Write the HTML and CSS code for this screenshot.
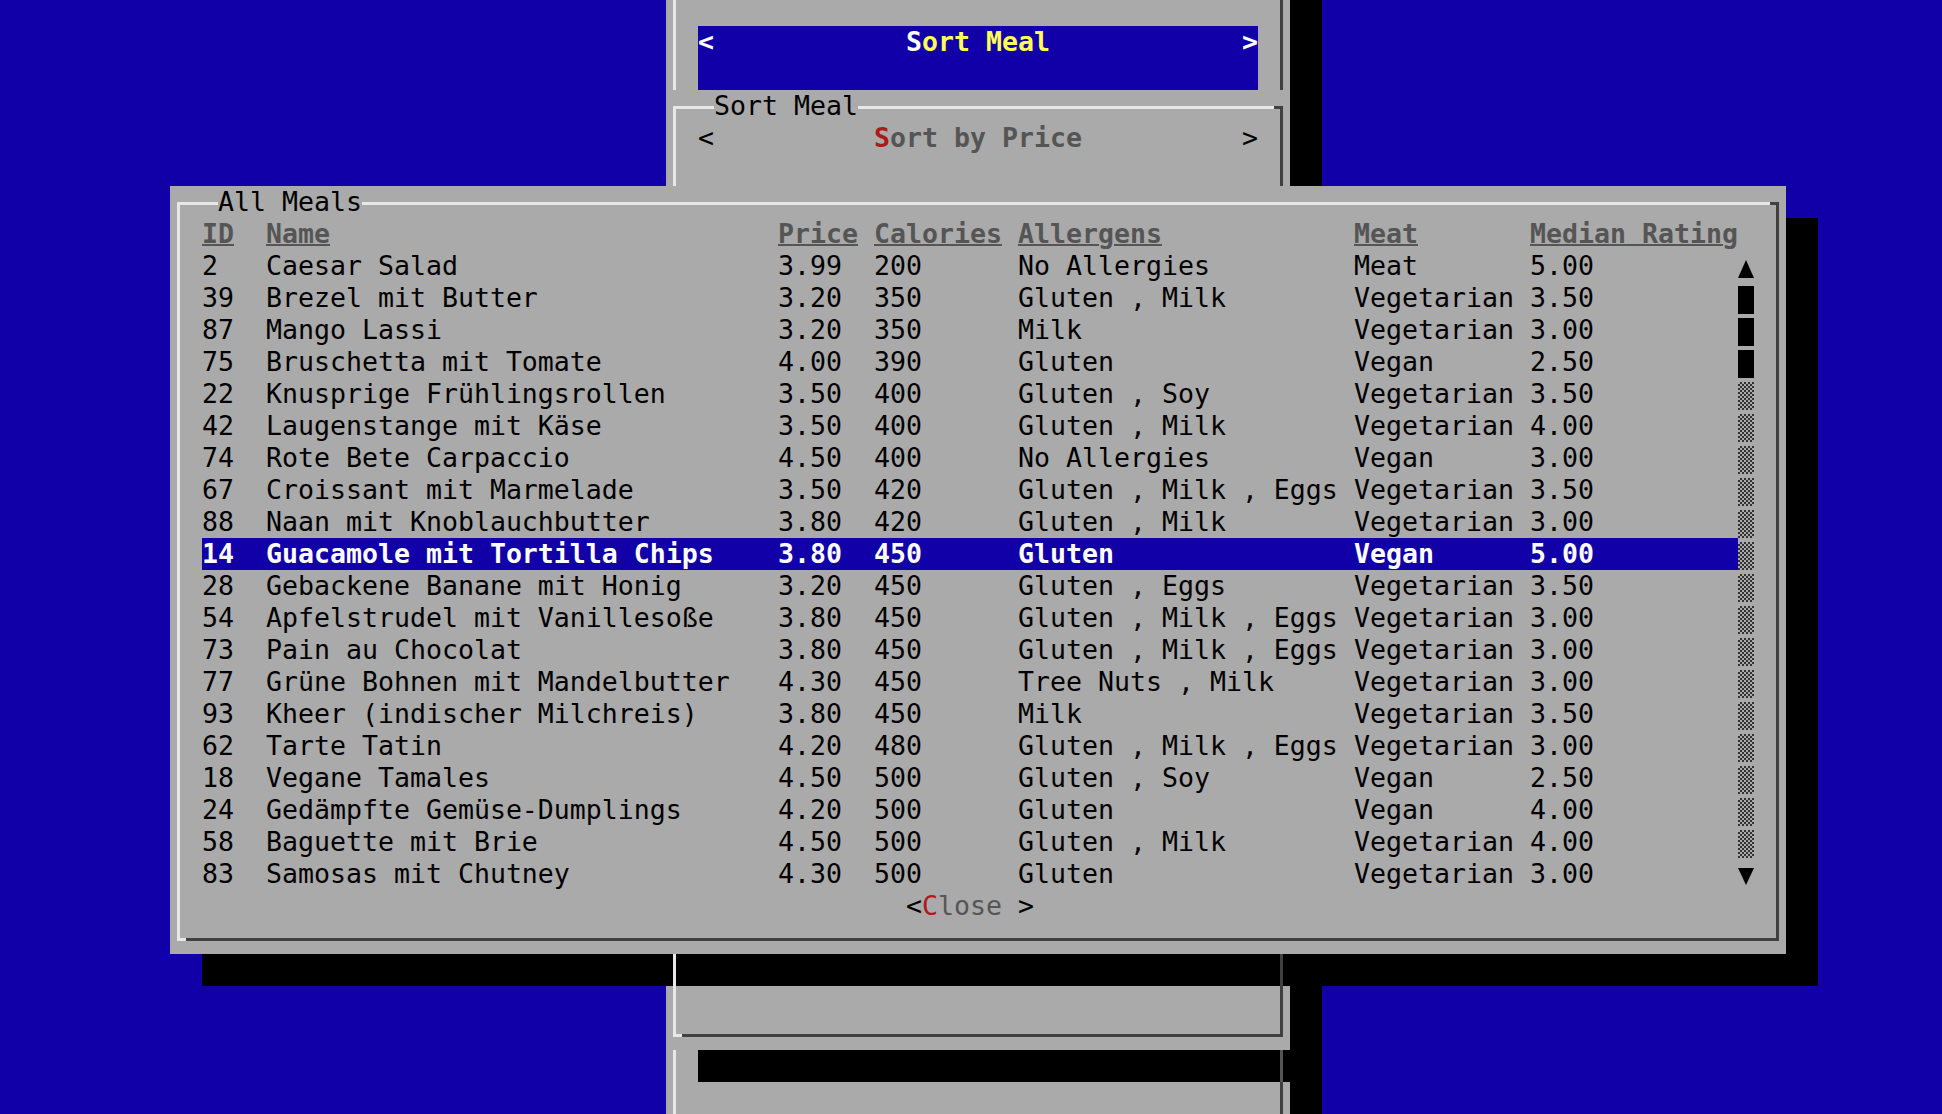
FILE: index.html
```html
<!DOCTYPE html>
<html lang="de">
<head>
<meta charset="utf-8">
<title>Sort Meal</title>
<link rel="stylesheet" href="styles.css">
</head>
<body>
<div class="screen">

  <div class="back">
    <div class="vl vl-top"></div>
    <div class="vr vr-top"></div>
    <div class="sortbar">
      <span class="sb-l">&lt;</span>
      <span class="sb-t"><span class="hotw">S</span>ort Meal</span>
      <span class="sb-r">&gt;</span>
    </div>
    <div class="box bk-box"></div>
    <span class="bk-label">Sort Meal</span>
    <span class="bk-lt">&lt;</span>
    <span class="bk-btn"><span class="hot">S</span>ort by Price</span>
    <span class="bk-gt">&gt;</span>
    <div class="bk-black"></div>
    <div class="vl vl-bot"></div>
    <div class="vr vr-bot"></div>
  </div>
  <div class="back-shadow"></div>

  <div class="main-shadow"></div>
  <div class="dim dim-l"></div>
  <div class="dim dim-r"></div>

  <div class="main box">
    <span class="title">All Meals</span>
    <div class="table">
      <div class="trow thead"><span>ID</span><span>Name</span><span>Price</span><span>Calories</span><span>Allergens</span><span>Meat</span><span>Median Rating</span></div>
      <div class="trow"><span>2</span><span>Caesar Salad</span><span>3.99</span><span>200</span><span>No Allergies</span><span>Meat</span><span>5.00</span></div>
      <div class="trow"><span>39</span><span>Brezel mit Butter</span><span>3.20</span><span>350</span><span>Gluten , Milk</span><span>Vegetarian</span><span>3.50</span></div>
      <div class="trow"><span>87</span><span>Mango Lassi</span><span>3.20</span><span>350</span><span>Milk</span><span>Vegetarian</span><span>3.00</span></div>
      <div class="trow"><span>75</span><span>Bruschetta mit Tomate</span><span>4.00</span><span>390</span><span>Gluten</span><span>Vegan</span><span>2.50</span></div>
      <div class="trow"><span>22</span><span>Knusprige Frühlingsrollen</span><span>3.50</span><span>400</span><span>Gluten , Soy</span><span>Vegetarian</span><span>3.50</span></div>
      <div class="trow"><span>42</span><span>Laugenstange mit Käse</span><span>3.50</span><span>400</span><span>Gluten , Milk</span><span>Vegetarian</span><span>4.00</span></div>
      <div class="trow"><span>74</span><span>Rote Bete Carpaccio</span><span>4.50</span><span>400</span><span>No Allergies</span><span>Vegan</span><span>3.00</span></div>
      <div class="trow"><span>67</span><span>Croissant mit Marmelade</span><span>3.50</span><span>420</span><span>Gluten , Milk , Eggs</span><span>Vegetarian</span><span>3.50</span></div>
      <div class="trow"><span>88</span><span>Naan mit Knoblauchbutter</span><span>3.80</span><span>420</span><span>Gluten , Milk</span><span>Vegetarian</span><span>3.00</span></div>
      <div class="trow sel"><span>14</span><span>Guacamole mit Tortilla Chips</span><span>3.80</span><span>450</span><span>Gluten</span><span>Vegan</span><span>5.00</span></div>
      <div class="trow"><span>28</span><span>Gebackene Banane mit Honig</span><span>3.20</span><span>450</span><span>Gluten , Eggs</span><span>Vegetarian</span><span>3.50</span></div>
      <div class="trow"><span>54</span><span>Apfelstrudel mit Vanillesoße</span><span>3.80</span><span>450</span><span>Gluten , Milk , Eggs</span><span>Vegetarian</span><span>3.00</span></div>
      <div class="trow"><span>73</span><span>Pain au Chocolat</span><span>3.80</span><span>450</span><span>Gluten , Milk , Eggs</span><span>Vegetarian</span><span>3.00</span></div>
      <div class="trow"><span>77</span><span>Grüne Bohnen mit Mandelbutter</span><span>4.30</span><span>450</span><span>Tree Nuts , Milk</span><span>Vegetarian</span><span>3.00</span></div>
      <div class="trow"><span>93</span><span>Kheer (indischer Milchreis)</span><span>3.80</span><span>450</span><span>Milk</span><span>Vegetarian</span><span>3.50</span></div>
      <div class="trow"><span>62</span><span>Tarte Tatin</span><span>4.20</span><span>480</span><span>Gluten , Milk , Eggs</span><span>Vegetarian</span><span>3.00</span></div>
      <div class="trow"><span>18</span><span>Vegane Tamales</span><span>4.50</span><span>500</span><span>Gluten , Soy</span><span>Vegan</span><span>2.50</span></div>
      <div class="trow"><span>24</span><span>Gedämpfte Gemüse-Dumplings</span><span>4.20</span><span>500</span><span>Gluten</span><span>Vegan</span><span>4.00</span></div>
      <div class="trow"><span>58</span><span>Baguette mit Brie</span><span>4.50</span><span>500</span><span>Gluten , Milk</span><span>Vegetarian</span><span>4.00</span></div>
      <div class="trow"><span>83</span><span>Samosas mit Chutney</span><span>4.30</span><span>500</span><span>Gluten</span><span>Vegetarian</span><span>3.00</span></div>
    </div>
    <div class="scroll">
      <div class="sc-cell"><svg class="arrow" width="16" height="32" viewBox="0 0 16 32"><polygon points="8,10 16,28 0,28" fill="#000"/></svg></div>
      <div class="sc-cell"><div class="blk"></div></div>
      <div class="sc-cell"><div class="blk"></div></div>
      <div class="sc-cell"><div class="blk"></div></div>
      <div class="sc-cell"><div class="shade"></div></div>
      <div class="sc-cell"><div class="shade"></div></div>
      <div class="sc-cell"><div class="shade"></div></div>
      <div class="sc-cell"><div class="shade"></div></div>
      <div class="sc-cell"><div class="shade"></div></div>
      <div class="sc-cell"><div class="shade"></div></div>
      <div class="sc-cell"><div class="shade"></div></div>
      <div class="sc-cell"><div class="shade"></div></div>
      <div class="sc-cell"><div class="shade"></div></div>
      <div class="sc-cell"><div class="shade"></div></div>
      <div class="sc-cell"><div class="shade"></div></div>
      <div class="sc-cell"><div class="shade"></div></div>
      <div class="sc-cell"><div class="shade"></div></div>
      <div class="sc-cell"><div class="shade"></div></div>
      <div class="sc-cell"><div class="shade"></div></div>
      <div class="sc-cell"><svg class="arrow" width="16" height="32" viewBox="0 0 16 32"><polygon points="0,10 16,10 8,27" fill="#000"/></svg></div>
    </div>
    <span class="close">&lt;<span class="hot">C</span><span class="dis">lose</span> &gt;</span>
  </div>

</div>
</body>
</html>
```

FILE: styles.css
```css
:root {
  --blue: #1100a8;
  --gray: #aaaaaa;
  --light: #e8e8e8;
  --dark: #404040;
  --dis: #555555;
  --red: #b01818;
  --yellow: #ffff55;
}

html, body {
  margin: 0;
  padding: 0;
  width: 1942px;
  height: 1114px;
  overflow: hidden;
  background: var(--blue);
}

.screen {
  display: grid;
  grid-template-columns: 10px repeat(121, 16px);
  grid-template-rows: repeat(35, 32px);
  margin-top: -6px;
  font-family: "DejaVu Sans Mono", monospace;
  font-size: 26.57px;
  line-height: 32px;
  white-space: pre;
  color: #000;
}

/* ---------- box drawing (3D frame on edge cells) ---------- */
.box { position: relative; }
.box::before {
  content: "";
  position: absolute;
  top: 16px; left: 7px; right: 16px; bottom: 13px;
  border-top: 3px solid var(--light);
  border-left: 3px solid var(--light);
  background: linear-gradient(var(--light), var(--light)) left bottom / 9px 3px no-repeat;
  background-origin: border-box;
}
.box::after {
  content: "";
  position: absolute;
  top: 16px; right: 7px; bottom: 13px; left: 16px;
  border-right: 3px solid var(--dark);
  border-bottom: 3px solid var(--dark);
  background: linear-gradient(var(--dark), var(--dark)) right top / 9px 3px no-repeat;
  background-origin: border-box;
}

/* ---------- back dialog ---------- */
.back {
  grid-column: 43 / span 39;
  grid-row: 1 / span 35;
  background: var(--gray);
  display: grid;
  grid-template-columns: repeat(39, 16px);
  grid-template-rows: repeat(35, 32px);
}
.vl { background: linear-gradient(to right, transparent 7px, var(--light) 7px 10px, transparent 10px); }
.vr { background: linear-gradient(to right, transparent 6px, var(--dark) 6px 9px, transparent 9px); }
.vl-top { grid-column: 1; grid-row: 1 / span 3; }
.vr-top { grid-column: 39; grid-row: 1 / span 3; }
.vl-bot { grid-column: 1; grid-row: 34 / span 2; }
.vr-bot { grid-column: 39; grid-row: 35; }

.sortbar {
  grid-column: 3 / span 35;
  grid-row: 2 / span 2;
  background: var(--blue);
  display: grid;
  grid-template-columns: repeat(35, 16px);
  grid-template-rows: 32px 32px;
  color: #fff;
  font-weight: bold;
}
.sb-l { grid-column: 1; grid-row: 1; }
.sb-t { grid-column: 14 / span 9; grid-row: 1; color: var(--yellow); }
.sb-t .hotw { color: #fff; }
.sb-r { grid-column: 35; grid-row: 1; }

.bk-box { grid-column: 1 / span 39; grid-row: 4 / span 30; }
.bk-label { grid-column: 4 / span 9; grid-row: 4; background: var(--gray); position: relative; z-index: 1; }
.bk-lt { grid-column: 3; grid-row: 5; }
.bk-btn { grid-column: 14 / span 13; grid-row: 5; color: var(--dis); font-weight: bold; }
.bk-gt { grid-column: 37; grid-row: 5; }
.hot { color: var(--red); }

.bk-black {
  grid-column: 3 / span 37;
  grid-row: 34;
  background:
    linear-gradient(to right, transparent calc(100% - 10px), #555 calc(100% - 10px) calc(100% - 7px), transparent calc(100% - 7px)),
    #000;
}

.back-shadow {
  grid-column: 82 / span 2;
  grid-row: 1 / span 35;
  background: #000;
}

/* ---------- main dialog ---------- */
.main-shadow {
  grid-column: 14 / span 101;
  grid-row: 8 / span 24;
  background: #000;
}
.dim { grid-row: 31; }
.dim-l { grid-column: 43; background: linear-gradient(to right, transparent 7px, #707070 7px 10px, transparent 10px); }
.dim-r { grid-column: 81; background: linear-gradient(to right, transparent 6px, #555 6px 9px, transparent 9px); }

.main {
  grid-column: 12 / span 101;
  grid-row: 7 / span 24;
  background: var(--gray);
  display: grid;
  grid-template-columns: repeat(101, 16px);
  grid-template-rows: repeat(24, 32px);
}
.title {
  grid-column: 4 / span 9;
  grid-row: 1;
  background: var(--gray);
  position: relative;
  z-index: 1;
}

.table {
  grid-column: 3 / span 96;
  grid-row: 2 / span 21;
  display: flex;
  flex-direction: column;
}
.trow {
  display: grid;
  grid-template-columns: 64px 512px 96px 144px 336px 176px 208px;
  height: 32px;
}
.trow span { overflow: visible; }
.thead span {
  color: var(--dis);
  font-weight: bold;
  text-decoration: underline;
  text-decoration-thickness: 2px;
  text-underline-offset: 1px;
}
.trow.sel {
  background: var(--blue);
  color: #fff;
  font-weight: bold;
}

.scroll {
  grid-column: 99;
  grid-row: 3 / span 20;
  display: flex;
  flex-direction: column;
}
.sc-cell { height: 32px; width: 16px; }
.arrow { display: block; }
.blk { margin-top: 4px; height: 28px; background: #000; }
.shade {
  margin-top: 4px;
  height: 28px;
  background: repeating-conic-gradient(#333 0 25%, var(--gray) 0 50%) 0 0 / 4px 4px;
}

.close { grid-column: 47 / span 8; grid-row: 23; }
.close .dis { color: var(--dis); }
```
